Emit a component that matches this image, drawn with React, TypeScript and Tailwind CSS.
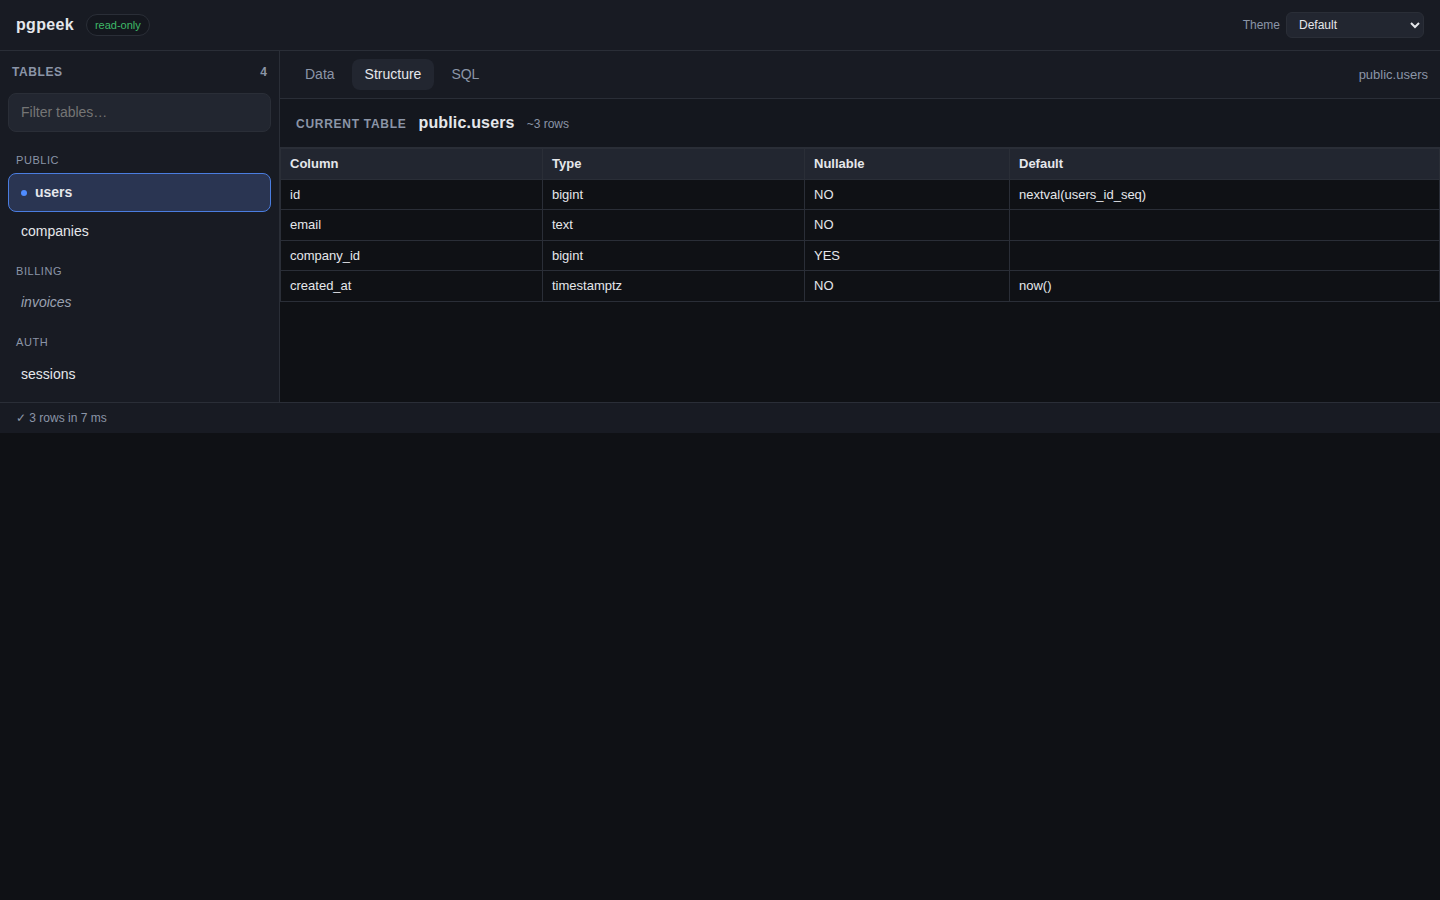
const rows = [
  { h: "h-[30px]", c: ["id", "bigint", "NO", "nextval(users_id_seq)"] },
  { h: "h-[31px] pb-px", c: ["email", "text", "NO", ""] },
  { h: "h-[30px]", c: ["company_id", "bigint", "YES", ""] },
  { h: "h-[31px] pb-px", c: ["created_at", "timestamptz", "NO", "now()"] },
];

function GroupLabel({ children, className = "" }: { children: string; className?: string }) {
  return <div className={`px-2 text-[11px] leading-[13px] tracking-[0.55px] uppercase text-[#8b95a7] ${className}`}>{children}</div>;
}

export default function App() {
  return (
    <div className="min-h-[900px] bg-[#0f1115] font-['Liberation_Sans',sans-serif] text-[#e5e7eb]">
      <header className="h-[51px] flex items-center justify-between px-4 bg-[#181b23] border-b border-[#2a2e37]">
        <div className="flex items-center gap-3">
          <span className="text-base font-bold tracking-[0.32px] text-[#e5e7eb]">pgpeek</span>
          <span className="h-[22px] px-2 flex items-center rounded-full bg-[#14171e] border border-[#2a2e37] text-[11px] text-[#3fb968]">read-only</span>
        </div>
        <div className="flex items-center gap-1.5">
          <span className="text-xs text-[#8b95a7]">Theme</span>
          <select className="w-[138px] h-[26px] pl-2 rounded-md bg-[#222630] border border-[#2a2e37] text-xs text-[#e5e7eb]">
            <option>Default</option>
          </select>
        </div>
      </header>
      <div className="flex h-[351px]">
        <aside className="w-[280px] shrink-0 bg-[#181b23] border-r border-[#2a2e37] p-2">
          <div className="flex justify-between items-center px-1 h-[25px] text-xs font-bold tracking-[0.6px] text-[#8b95a7]">
            <span>TABLES</span>
            <span className="tracking-normal">4</span>
          </div>
          <input
            readOnly
            placeholder="Filter tables…"
            className="block mt-[9px] w-full h-[39px] px-3 pb-0.5 rounded-lg bg-[#222630] border border-[#2a2e37] text-sm placeholder:text-[#757575] outline-none"
          />
          <GroupLabel className="mt-[22px]">PUBLIC</GroupLabel>
          <div className="mt-[6px] h-[39px] pb-px flex items-center gap-2 px-3 rounded-lg bg-[#2a3552] border border-[#4a7de0] text-sm font-bold text-[#e5e7eb]">
            <span className="w-1.5 h-1.5 rounded-full bg-[#4f8cff] mt-px" />
            users
          </div>
          <div className="h-[39px] pb-px flex items-center px-[13px] text-sm text-[#e5e7eb]">companies</div>
          <GroupLabel className="mt-[14px]">BILLING</GroupLabel>
          <div className="mt-[5px] h-[39px] pb-px flex items-center px-[13px] text-sm italic text-[#9aa1b0]">invoices</div>
          <GroupLabel className="mt-[14px]">AUTH</GroupLabel>
          <div className="mt-[5px] h-[39px] flex items-center px-[13px] text-sm text-[#e5e7eb]">sessions</div>
        </aside>
        <main className="flex-1 min-w-0 flex flex-col">
          <div className="h-[48px] shrink-0 flex items-center justify-between pl-3 pr-3 bg-[#181b23] border-b border-[#2a2e37]">
            <div className="flex items-center gap-1">
              <span className="h-[31px] px-[13px] pb-px flex items-center rounded-lg text-sm text-[#8b95a7]">Data</span>
              <span className="h-[31px] px-[13px] pb-px flex items-center rounded-lg bg-[#222630] text-sm text-[#e5e7eb]">Structure</span>
              <span className="h-[31px] px-[13px] pb-px flex items-center rounded-lg text-sm text-[#8b95a7]">SQL</span>
            </div>
            <span className="text-[13px] text-[#8b95a7]">public.users</span>
          </div>
          <div className="h-[49px] shrink-0 flex items-center gap-3 px-4 bg-[#14171e] border-b border-[#2a2e37]">
            <span className="pt-0.5 text-xs font-bold tracking-[0.72px] text-[#8b95a7]">CURRENT TABLE</span>
            <span className="text-base font-bold tracking-[0.16px] text-[#e5e7eb]">public.users</span>
            <span className="pt-0.5 text-xs text-[#8b95a7]">~3 rows</span>
          </div>
          <table className="w-full table-fixed border-collapse text-[13px] leading-[15px]">
            <colgroup>
              <col className="w-[262px]" />
              <col className="w-[262px]" />
              <col className="w-[205px]" />
              <col />
            </colgroup>
            <thead>
              <tr className="bg-[#222630]">
                {["Column", "Type", "Nullable", "Default"].map((h) => (
                  <th key={h} className="h-[31px] px-[9px] pb-px text-left font-bold border border-[#2a2e37] text-[#e5e7eb]">{h}</th>
                ))}
              </tr>
            </thead>
            <tbody>
              {rows.map((r) => (
                <tr key={r.c[0]}>
                  {r.c.map((c, i) => (
                    <td key={i} className={`${r.h} px-[9px] border border-[#2a2e37] text-[#e5e7eb]`}>{c}</td>
                  ))}
                </tr>
              ))}
            </tbody>
          </table>
        </main>
      </div>
      <footer className="h-[31px] flex items-center px-4 bg-[#181b23] border-t border-[#2a2e37] text-xs text-[#8b95a7]">✓ 3 rows in 7 ms</footer>
    </div>
  );
}
